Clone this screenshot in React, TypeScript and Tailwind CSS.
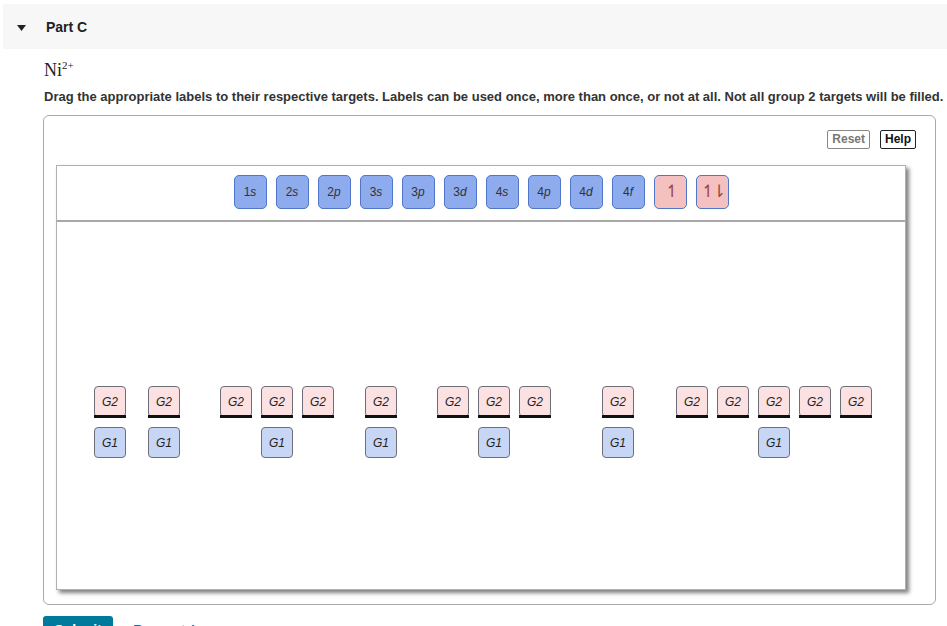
import React from 'react';

type Group = { left: number; count: number; g1: number };

const labels = ['1s', '2s', '2p', '3s', '3p', '3d', '4s', '4p', '4d', '4f'];

// x offsets of each group inside the drop area, G1 sits under the given column
const groups: Group[] = [
  { left: 37, count: 1, g1: 0 },
  { left: 22, count: 1, g1: 0 },
  { left: 40, count: 3, g1: 1 },
  { left: 31, count: 1, g1: 0 },
  { left: 40, count: 3, g1: 1 },
  { left: 51, count: 1, g1: 0 },
  { left: 42, count: 5, g1: 2 },
];

function OrbitalLabel({ text }: { text: string }) {
  return (
    <div className="w-[33px] h-[34px] rounded-[5px] border border-[#4f76c8] bg-[#8eabee] flex items-center justify-center text-[12px] text-[#333]">
      {text[0]}
      <i>{text.slice(1)}</i>
    </div>
  );
}

function SpinLabel({ text }: { text: string }) {
  return (
    <div className="w-[33px] h-[34px] rounded-[5px] border border-[#4f76c8] bg-[#f4c0c0] flex items-center justify-center text-[17px] font-light text-[#9a4a44] font-['DejaVu_Sans',sans-serif] tracking-[-3px]">
      {text}
    </div>
  );
}

function Target({ kind }: { kind: 'G1' | 'G2' }) {
  const isG2 = kind === 'G2';
  return (
    <div className="w-[32px] flex flex-col">
      <div
        className={`h-[31px] rounded-[4px] border border-[#6e6e78] flex items-center justify-center text-[12px] italic text-[#222] ${
          isG2 ? 'bg-[#fbe1e1]' : 'bg-[#c8d6f6]'
        }`}
      >
        {kind}
      </div>
      {isG2 && <div className="-mt-[2px] h-[3px] bg-[#111]" />}
    </div>
  );
}

export default function App() {
  return (
    <div className="w-[947px] h-[626px] overflow-hidden bg-white font-['Liberation_Sans',Arial,sans-serif] text-[#333]">
      {/* Header */}
      <div className="ml-[3px] mt-[4px] h-[45px] bg-[#f7f7f7] flex items-center">
        <svg className="ml-[14px] mt-[2px] w-[9px] h-[6px]" viewBox="0 0 9 6">
          <path d="M0 0 H9 L4.5 6 Z" fill="#222" />
        </svg>
        <span className="ml-[20px] mt-[2px] text-[14px] font-bold text-[#222]">Part C</span>
      </div>

      <div className="pl-[43px]">
        <div className="mt-[11px] ml-[1px] font-['Liberation_Serif',serif] text-[18px] text-[#222] leading-[20px]">
          Ni<sup className="text-[11px] -top-[7px]">2+</sup>
        </div>
        <p className="mt-[8px] ml-[1px] text-[13px] font-bold text-[#333] whitespace-nowrap leading-[18px]">
          Drag the appropriate labels to their respective targets. Labels can be used once, more than once, or not at
          all. Not all group 2 targets will be filled.
        </p>

        {/* Work area */}
        <div className="mt-[9px] w-[893px] h-[490px] rounded-[6px] border border-[#aaa] pl-[12px] pt-[14px]">
          <div className="flex justify-end gap-[10px] pr-[19px]">
            <button className="h-[19px] px-[4px] rounded-[2px] border border-[#888] text-[12px] font-bold text-[#777] leading-[17px]">
              Reset
            </button>
            <button className="h-[19px] px-[4px] rounded-[2px] border border-[#222] text-[12px] font-bold text-[#111] leading-[17px]">
              Help
            </button>
          </div>

          <div className="mt-[16px] w-[850px] h-[425px] border border-[#b0b0b0] bg-white shadow-[3px_3px_4px_rgba(0,0,0,0.5)] flex flex-col">
            <div className="h-[56px] border-b-2 border-[#a8a8a8] flex items-center justify-center gap-[9px] pb-[3px]">
              {labels.map((l) => (
                <OrbitalLabel key={l} text={l} />
              ))}
              <SpinLabel text="↿" />
              <SpinLabel text="↿⇂" />
            </div>

            <div className="pt-[164px] flex">
              {groups.map((g, gi) => (
                <div key={gi} className="flex flex-col gap-[9px]" style={{ marginLeft: g.left }}>
                  <div className="flex gap-[9px]">
                    {Array.from({ length: g.count }).map((_, i) => (
                      <Target key={i} kind="G2" />
                    ))}
                  </div>
                  <div className="flex gap-[9px]">
                    {Array.from({ length: g.count }).map((_, i) =>
                      i === g.g1 ? <Target key={i} kind="G1" /> : <div key={i} className="w-[32px]" />
                    )}
                  </div>
                </div>
              ))}
            </div>
          </div>
        </div>

        <div className="mt-[11px] flex items-start">
          <button className="w-[70px] h-[34px] rounded-[3px] bg-[#007a9b] text-white text-[14px] font-bold pt-[6px] leading-[16px] flex justify-center items-start">
            Submit
          </button>
          <span className="ml-[20px] mt-[6px] text-[14px] text-[#0a6ea8] leading-[16px]">Request Answer</span>
        </div>
      </div>
    </div>
  );
}
